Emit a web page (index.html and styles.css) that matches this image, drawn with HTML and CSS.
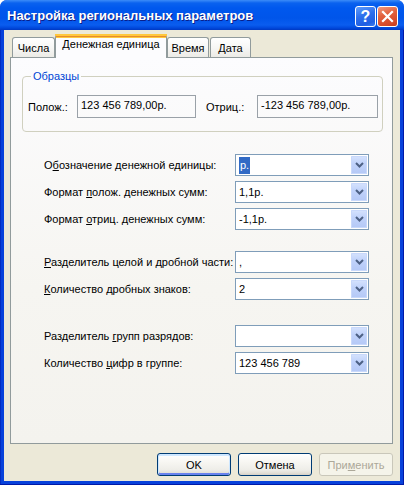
FILE: index.html
```html
<!DOCTYPE html>
<html lang="ru">
<head>
<meta charset="utf-8">
<title>Настройка региональных параметров</title>
<link rel="stylesheet" href="styles.css">
</head>
<body>
<div class="window">
  <div class="titlebar">
    <span class="title">Настройка региональных параметров</span>
    <div class="tb-buttons">
      <span class="tb-btn help">?</span>
      <span class="tb-btn close"><svg width="13" height="13" viewBox="0 0 13 13"><path d="M2 2 L11 11 M11 2 L2 11" stroke="#fff" stroke-width="2.2" stroke-linecap="square"/></svg></span>
    </div>
  </div>
  <div class="frame">
    <div class="client">
      <div class="tabs">
        <div class="tab t1">Числа</div>
        <div class="tab active t2">Денежная единица</div>
        <div class="tab t3">Время</div>
        <div class="tab t4">Дата</div>
      </div>
      <div class="panel">
        <fieldset class="group">
          <legend>Образцы</legend>
          <div class="sample-row">
            <span class="s-label">Полож.:</span>
            <div class="ro-box">123 456 789,00р.</div>
            <span class="s-label s2">Отриц.:</span>
            <div class="ro-box wide">-123 456 789,00р.</div>
          </div>
        </fieldset>

        <div class="fields g1">
          <div class="row"><span class="lbl">О<u>б</u>означение денежной единицы:</span><div class="combo"><span class="val"><span class="sel">р.</span></span><span class="dd"><svg width="9" height="6" viewBox="0 0 9 6"><path d="M1 1 L4.5 4.5 L8 1" fill="none" stroke="#4D6185" stroke-width="2"/></svg></span></div></div>
          <div class="row"><span class="lbl">Формат <u>п</u>олож. денежных сумм:</span><div class="combo"><span class="val">1,1р.</span><span class="dd"><svg width="9" height="6" viewBox="0 0 9 6"><path d="M1 1 L4.5 4.5 L8 1" fill="none" stroke="#4D6185" stroke-width="2"/></svg></span></div></div>
          <div class="row"><span class="lbl">Формат <u>о</u>триц. денежных сумм:</span><div class="combo"><span class="val">-1,1р.</span><span class="dd"><svg width="9" height="6" viewBox="0 0 9 6"><path d="M1 1 L4.5 4.5 L8 1" fill="none" stroke="#4D6185" stroke-width="2"/></svg></span></div></div>
        </div>

        <div class="fields g2">
          <div class="row"><span class="lbl"><u>Р</u>азделитель целой и дробной части:</span><div class="combo"><span class="val">,</span><span class="dd"><svg width="9" height="6" viewBox="0 0 9 6"><path d="M1 1 L4.5 4.5 L8 1" fill="none" stroke="#4D6185" stroke-width="2"/></svg></span></div></div>
          <div class="row"><span class="lbl"><u>К</u>оличество дробных знаков:</span><div class="combo"><span class="val">2</span><span class="dd"><svg width="9" height="6" viewBox="0 0 9 6"><path d="M1 1 L4.5 4.5 L8 1" fill="none" stroke="#4D6185" stroke-width="2"/></svg></span></div></div>
        </div>

        <div class="fields g3">
          <div class="row"><span class="lbl">Разделитель <u>г</u>рупп разрядов:</span><div class="combo"><span class="val"></span><span class="dd"><svg width="9" height="6" viewBox="0 0 9 6"><path d="M1 1 L4.5 4.5 L8 1" fill="none" stroke="#4D6185" stroke-width="2"/></svg></span></div></div>
          <div class="row"><span class="lbl">Количество <u>ц</u>ифр в группе:</span><div class="combo"><span class="val">123 456 789</span><span class="dd"><svg width="9" height="6" viewBox="0 0 9 6"><path d="M1 1 L4.5 4.5 L8 1" fill="none" stroke="#4D6185" stroke-width="2"/></svg></span></div></div>
        </div>
      </div>
      <div class="buttons">
        <button class="btn default">OK</button>
        <button class="btn">Отмена</button>
        <button class="btn disabled">При<u>м</u>енить</button>
      </div>
    </div>
  </div>
</div>
</body>
</html>
```

FILE: styles.css
```css
html, body {
  margin: 0;
  padding: 0;
}
body {
  width: 404px;
  height: 485px;
  overflow: hidden;
  background: #ffffff;
  font-family: "Liberation Sans", Tahoma, Arial, sans-serif;
  font-size: 11px;
  color: #000;
}
.window {
  width: 404px;
  height: 485px;
  display: flex;
  flex-direction: column;
  border-radius: 7px 7px 0 0;
  overflow: hidden;
  background: #0842DB;
}
.titlebar {
  height: 30px;
  flex: none;
  display: flex;
  align-items: center;
  justify-content: space-between;
  padding: 0 6px 0 7px;
  box-sizing: border-box;
  background: linear-gradient(180deg, #3C8CF8 0px, #0A62EF 3px, #0058EE 8px, #0055EA 18px, #0A5DEF 25px, #0048DC 28px, #0038C2 30px);
}
.title {
  color: #fff;
  font-family: "Liberation Sans", Arial, sans-serif;
  font-weight: bold;
  font-size: 13px;
  text-shadow: 1px 1px 0 #0A1E8A;
  padding-top: 1px;
}
.tb-buttons {
  display: flex;
  gap: 1px;
  padding-top: 2px;
}
.tb-btn {
  width: 21px;
  height: 21px;
  box-sizing: border-box;
  border: 1px solid #fff;
  border-radius: 3px;
  display: flex;
  align-items: center;
  justify-content: center;
  color: #fff;
}
.help {
  background: linear-gradient(160deg, #5E9CFB 0%, #2C6EEC 45%, #1F5FE3 80%, #3E7EF0 100%);
  font-family: "Liberation Sans", Arial, sans-serif;
  font-weight: bold;
  font-size: 16px;
  line-height: 19px;
}
.close {
  background: linear-gradient(160deg, #F09A7E 0%, #E2613E 40%, #D4492A 80%, #C43C1C 100%);
}
.frame {
  flex: 1;
  display: flex;
  padding: 0 4px 4px 4px;
  background: linear-gradient(90deg, #0019A8 0, #0842DB 1px, #0842DB 100%);
  box-shadow: inset -1px -1px 0 #0019A8;
}
.client {
  flex: 1;
  background: #ECE9D8;
  padding: 4px 7px 0 6px;
  display: flex;
  flex-direction: column;
}
.tabs {
  height: 23px;
  display: flex;
  align-items: flex-end;
  padding-left: 2px;
  position: relative;
  z-index: 1;
}
.tab {
  height: 20px;
  box-sizing: border-box;
  border: 1px solid #919B9C;
  border-bottom: none;
  border-radius: 3px 3px 0 0;
  background: linear-gradient(180deg, #FFFFFF 0%, #F7F7F5 50%, #ECEBE6 100%);
  text-align: center;
  line-height: 20px;
  white-space: nowrap;
}
.t1 { width: 43px; }
.t2 { width: 112px; }
.t3 { width: 42px; margin-left: 0; }
.t4 { width: 41px; margin-left: 1px; }
.tab.active {
  height: 24px;
  margin-bottom: -1px;
  border-top: 3px solid #FFC83C;
  box-shadow: inset 0 1px 0 #FFC83C;
  border-top-color: #E68B2C;
  background: #FCFCFE;
  line-height: 17px;
  position: relative;
}
.tab.active::before {
  content: "";
  display: block;
  height: 2px;
  margin: -3px -1px 0;
  background: #FFC73C;
}
.panel {
  height: 387px;
  box-sizing: border-box;
  border: 1px solid #919B9C;
  background: linear-gradient(180deg, #FCFCFE 0%, #F6F5F1 60%, #F4F3EE 100%);
  padding: 0 0 0 0;
}
.group {
  margin: 12px 9px 0 11px;
  padding: 12px 0 13px 5px;
  border: 1px solid #D0D0BF;
  border-radius: 4px;
  min-width: 0;
}
.group legend {
  color: #0046D5;
  padding: 0 2px;
  margin-left: 3px;
  line-height: 13px;
}
.sample-row {
  display: flex;
  align-items: center;
  height: 23px;
}
.s-label {
  width: 49px;
  flex: none;
}
.s-label.s2 {
  margin-left: 10px;
  width: 51px;
}
.ro-box {
  width: 119px;
  height: 23px;
  box-sizing: border-box;
  border: 1px solid #9AA1A8;
  padding: 3px 0 0 3px;
  white-space: nowrap;
}
.ro-box.wide {
  width: 121px;
}
.fields {
  padding-left: 33px;
  display: flex;
  flex-direction: column;
  gap: 5px;
}
.g1 { margin-top: 22px; }
.g2 { margin-top: 21px; }
.g3 { margin-top: 25px; }
.row {
  display: flex;
  align-items: center;
  height: 22px;
}
.lbl {
  width: 191px;
  flex: none;
  white-space: nowrap;
}
.combo {
  width: 134px;
  height: 22px;
  box-sizing: border-box;
  border: 1px solid #7F9DB9;
  background: #fff;
  display: flex;
  align-items: stretch;
  padding: 1px;
}
.val {
  flex: 1;
  padding-left: 2px;
  line-height: 18px;
  white-space: nowrap;
}
.sel {
  background: #316AC5;
  color: #fff;
  display: inline-block;
  padding: 0 1px;
  line-height: 17px;
}
.dd {
  width: 16px;
  flex: none;
  display: flex;
  align-items: center;
  justify-content: center;
  border-radius: 1px;
  background: linear-gradient(180deg, #D6E3FD 0%, #C1D3FB 40%, #B4C8F6 100%);
  box-shadow: inset 0 0 0 1px #C8D8FB;
}
.buttons {
  display: flex;
  justify-content: flex-end;
  gap: 7px;
  margin-top: 9px;
}
.btn {
  width: 74px;
  height: 23px;
  box-sizing: border-box;
  border: 1px solid #003C74;
  border-radius: 3px;
  background: linear-gradient(180deg, #FFFFFF 0%, #F8F7F3 35%, #EEEDE8 75%, #E3E0D8 90%, #D6D0C5 100%);
  font-family: "Liberation Sans", Tahoma, Arial, sans-serif;
  font-size: 11px;
  color: #000;
  padding: 0;
  margin: 0;
}
.btn.default {
  box-shadow: inset 0 1px 0 1px #CEE7FF, inset 0 -1px 0 1px #6982EE;
}
.btn.disabled {
  border-color: #C9C7BA;
  color: #ACA899;
  background: #F5F4EA;
}
```
